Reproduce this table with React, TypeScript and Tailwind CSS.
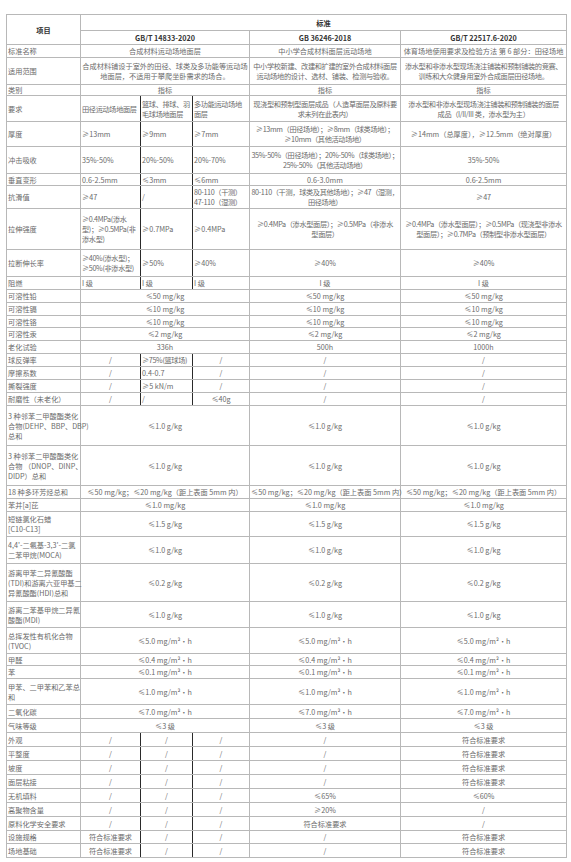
import React from "react";

type TdProps = {
  children?: React.ReactNode;
  cs?: number;
  rs?: number;
  left?: boolean;
  dark?: boolean;
  bold?: boolean;
  tight?: boolean;
};

// one table cell; "dark" draws the black divider between the GB/T 14833 sub columns
function Td({ children, cs, rs, left, dark, bold, tight }: TdProps) {
  return (
    <td
      colSpan={cs}
      rowSpan={rs}
      className={`border border-[#b8b8b8] px-[1px] py-0 whitespace-nowrap align-middle ${
        left ? "text-left" : "text-center"
      } ${dark ? "border-r-[#2a2a2a]" : ""} ${bold ? "font-bold text-[#333]" : ""} ${
        tight ? "tracking-[-0.35px]" : ""
      }`}
    >
      {children}
    </td>
  );
}

const Lbl = ({ children }: { children: React.ReactNode }) => <Td left>{children}</Td>;

// same value under each of the three standards
function Same3({ v }: { v: string }) {
  return (
    <>
      <Td cs={3}>{v}</Td>
      <Td>{v}</Td>
      <Td>{v}</Td>
    </>
  );
}

function Slash3({ a = "/", b = "/", c = "/" }: { a?: string; b?: string; c?: string }) {
  return (
    <>
      <Td dark>{a}</Td>
      <Td dark>{b}</Td>
      <Td>{c}</Td>
    </>
  );
}

export default function App() {
  return (
    <div className="min-h-[862px] w-[571px] bg-white pt-[14px] pl-[6px] font-['Noto_Sans_CJK_SC','Noto_Sans',sans-serif] text-[7.2px] leading-[10px] text-[#6a6a6a]">
      <table className="w-[560px] table-fixed border-collapse border border-[#a8a8a8]">
        <colgroup>
          <col className="w-[74px]" />
          <col className="w-[60px]" />
          <col className="w-[52px]" />
          <col className="w-[57px]" />
          <col className="w-[151px]" />
          <col className="w-[166px]" />
        </colgroup>
        <tbody>
          <tr className="h-[16px]">
            <Td rs={2} bold>项目</Td>
            <Td cs={5} bold>标准</Td>
          </tr>
          <tr className="h-[14px]">
            <Td cs={3} bold>GB/T 14833-2020</Td>
            <Td bold>GB 36246-2018</Td>
            <Td bold>GB/T 22517.6-2020</Td>
          </tr>
          <tr className="h-[13px]">
            <Lbl>标准名称</Lbl>
            <Td cs={3}>合成材料运动场地面层</Td>
            <Td>中小学合成材料面层运动场地</Td>
            <Td>体育场地使用要求及检验方法 第 6 部分：田径场地</Td>
          </tr>
          <tr className="h-[27px]">
            <Lbl>适用范围</Lbl>
            <Td cs={3}>
              合成材料铺设于室外的田径、球类及多功能等运动场
              <br />
              地面层，不适用于攀爬坐卧需求的场合。
            </Td>
            <Td tight>
              中小学校新建、改建和扩建的室外合成材料面层
              <br />
              运动场地的设计、选材、铺装、检测与验收。
            </Td>
            <Td tight>
              渗水型和非渗水型现场浇注铺装和预制铺装的竞赛、
              <br />
              训练和大众健身用室外合成面层田径场地。
            </Td>
          </tr>
          <tr className="h-[11px]">
            <Lbl>类别</Lbl>
            <Td cs={3}>指标</Td>
            <Td>指标</Td>
            <Td>指标</Td>
          </tr>
          <tr className="h-[26px]">
            <Lbl>要求</Lbl>
            <Td left dark tight>田径运动场地面层</Td>
            <Td left dark tight>
              篮球、排球、羽
              <br />
              毛球场地面层
            </Td>
            <Td left tight>
              多功能运动场地
              <br />
              面层
            </Td>
            <Td tight>
              现浇型和预制型面层成品（人造草面层及原料要
              <br />
              求未列在此表内）
            </Td>
            <Td tight>
              渗水型和非渗水型现场浇注铺装和预制铺装的面层
              <br />
              成品（I/II/III 类，渗水型为主）
            </Td>
          </tr>
          <tr className="h-[25px]">
            <Lbl>厚度</Lbl>
            <Td left dark>≥13mm</Td>
            <Td left dark>≥9mm</Td>
            <Td left>≥7mm</Td>
            <Td tight>
              ≥13mm（田径场地）；≥8mm（球类场地）；
              <br />
              ≥10mm（其他活动场地）
            </Td>
            <Td>≥14mm（总厚度），≥12.5mm（绝对厚度）</Td>
          </tr>
          <tr className="h-[27px]">
            <Lbl>冲击吸收</Lbl>
            <Td left dark>35%-50%</Td>
            <Td left dark>20%-50%</Td>
            <Td left>20%-70%</Td>
            <Td tight>
              35%-50%（田径场地）；20%-50%（球类场地）；
              <br />
              25%-50%（其他活动场地）
            </Td>
            <Td>35%-50%</Td>
          </tr>
          <tr className="h-[12px]">
            <Lbl>垂直变形</Lbl>
            <Td left dark>0.6-2.5mm</Td>
            <Td left dark>≤3mm</Td>
            <Td left>≤6mm</Td>
            <Td>0.6-3.0mm</Td>
            <Td>0.6-2.5mm</Td>
          </tr>
          <tr className="h-[23px]">
            <Lbl>抗滑值</Lbl>
            <Td left dark>≥47</Td>
            <Td left dark>/</Td>
            <Td left tight>
              80-110（干测）
              <br />
              47-110（湿测）
            </Td>
            <Td tight>
              80-110（干测，球类及其他场地）；≥47（湿测，
              <br />
              田径场地）
            </Td>
            <Td>≥47</Td>
          </tr>
          <tr className="h-[41px]">
            <Lbl>拉伸强度</Lbl>
            <Td left dark tight>
              ≥0.4MPa(渗水
              <br />
              型)；≥0.5MPa(非
              <br />
              渗水型)
            </Td>
            <Td left dark>≥0.7MPa</Td>
            <Td left>≥0.4MPa</Td>
            <Td tight>
              ≥0.4MPa（渗水型面层）；≥0.5MPa（非渗水
              <br />
              型面层）
            </Td>
            <Td tight>
              ≥0.4MPa（渗水型面层）；≥0.5MPa（现浇型非渗水
              <br />
              型面层）；≥0.7MPa（预制型非渗水型面层）
            </Td>
          </tr>
          <tr className="h-[27px]">
            <Lbl>拉断伸长率</Lbl>
            <Td left dark tight>
              ≥40%(渗水型)；
              <br />
              ≥50%(非渗水型)
            </Td>
            <Td left dark>≥50%</Td>
            <Td left>≥40%</Td>
            <Td>≥40%</Td>
            <Td>≥40%</Td>
          </tr>
          <tr className="h-[13px]">
            <Lbl>阻燃</Lbl>
            <Td left dark>I 级</Td>
            <Td left dark>I 级</Td>
            <Td left>I 级</Td>
            <Td>I 级</Td>
            <Td>I 级</Td>
          </tr>
          <tr className="h-[13px]">
            <Lbl>可溶性铅</Lbl>
            <Same3 v="≤50 mg/kg" />
          </tr>
          <tr className="h-[13px]">
            <Lbl>可溶性镉</Lbl>
            <Same3 v="≤10 mg/kg" />
          </tr>
          <tr className="h-[12px]">
            <Lbl>可溶性铬</Lbl>
            <Same3 v="≤10 mg/kg" />
          </tr>
          <tr className="h-[13px]">
            <Lbl>可溶性汞</Lbl>
            <Same3 v="≤2 mg/kg" />
          </tr>
          <tr className="h-[13px]">
            <Lbl>老化试验</Lbl>
            <Td cs={3}>336h</Td>
            <Td>500h</Td>
            <Td>1000h</Td>
          </tr>
          <tr className="h-[13px]">
            <Lbl>球反弹率</Lbl>
            <Td dark>/</Td>
            <Td left dark tight>≥75%(篮球场)</Td>
            <Td>/</Td>
            <Td>/</Td>
            <Td>/</Td>
          </tr>
          <tr className="h-[13px]">
            <Lbl>摩擦系数</Lbl>
            <Td dark>/</Td>
            <Td left dark>0.4-0.7</Td>
            <Td>/</Td>
            <Td>/</Td>
            <Td>/</Td>
          </tr>
          <tr className="h-[13px]">
            <Lbl>撕裂强度</Lbl>
            <Td dark>/</Td>
            <Td left dark>≥5 kN/m</Td>
            <Td>/</Td>
            <Td>/</Td>
            <Td>/</Td>
          </tr>
          <tr className="h-[13px]">
            <Lbl>耐磨性（未老化）</Lbl>
            <Td dark>/</Td>
            <Td left dark>/</Td>
            <Td>≤40g</Td>
            <Td>/</Td>
            <Td>/</Td>
          </tr>
          <tr className="h-[40px]">
            <Lbl>
              3 种邻苯二甲酸酯类化
              <br />
              合物(DEHP、BBP、DBP)
              <br />
              总和
            </Lbl>
            <Same3 v="≤1.0 g/kg" />
          </tr>
          <tr className="h-[40px]">
            <Lbl>
              3 种邻苯二甲酸酯类化
              <br />
              合物 （DNOP、DINP、
              <br />
              DIDP）总和
            </Lbl>
            <Same3 v="≤1.0 g/kg" />
          </tr>
          <tr className="h-[13px]">
            <Lbl>18 种多环芳烃总和</Lbl>
            <Same3 v="≤50 mg/kg；≤20 mg/kg（距上表面 5mm 内）" />
          </tr>
          <tr className="h-[13px]">
            <Lbl>苯并[a]芘</Lbl>
            <Same3 v="≤1.0 mg/kg" />
          </tr>
          <tr className="h-[25px]">
            <Lbl>
              短链氯化石蜡
              <br />
              [C10-C13]
            </Lbl>
            <Same3 v="≤1.5 g/kg" />
          </tr>
          <tr className="h-[27px]">
            <Lbl>
              4,4'-二氨基-3,3'-二氯
              <br />
              二苯甲烷(MOCA)
            </Lbl>
            <Same3 v="≤1.0 g/kg" />
          </tr>
          <tr className="h-[38px]">
            <Lbl>
              游离甲苯二异氰酸酯
              <br />
              (TDI)和游离六亚甲基二
              <br />
              异氰酸酯(HDI)总和
            </Lbl>
            <Same3 v="≤0.2 g/kg" />
          </tr>
          <tr className="h-[26px]">
            <Lbl>
              游离二苯基甲烷二异氰
              <br />
              酸酯(MDI)
            </Lbl>
            <Same3 v="≤1.0 g/kg" />
          </tr>
          <tr className="h-[26px]">
            <Lbl>
              总挥发性有机化合物
              <br />
              (TVOC)
            </Lbl>
            <Same3 v="≤5.0 mg/m²·h" />
          </tr>
          <tr className="h-[12px]">
            <Lbl>甲醛</Lbl>
            <Same3 v="≤0.4 mg/m²·h" />
          </tr>
          <tr className="h-[13px]">
            <Lbl>苯</Lbl>
            <Same3 v="≤0.1 mg/m²·h" />
          </tr>
          <tr className="h-[26px]">
            <Lbl>
              甲苯、二甲苯和乙苯总
              <br />
              和
            </Lbl>
            <Same3 v="≤1.0 mg/m²·h" />
          </tr>
          <tr className="h-[14px]">
            <Lbl>二氧化碳</Lbl>
            <Same3 v="≤7.0 mg/m²·h" />
          </tr>
          <tr className="h-[14px]">
            <Lbl>气味等级</Lbl>
            <Same3 v="≤3 级" />
          </tr>
          {["外观", "平整度", "坡度", "面层粘接"].map((k) => (
            <tr key={k} className="h-[14px]">
              <Lbl>{k}</Lbl>
              <Slash3 />
              <Td>/</Td>
              <Td>符合标准要求</Td>
            </tr>
          ))}
          <tr className="h-[14px]">
            <Lbl>无机填料</Lbl>
            <Slash3 />
            <Td>≤65%</Td>
            <Td>≤60%</Td>
          </tr>
          <tr className="h-[14px]">
            <Lbl>高聚物含量</Lbl>
            <Slash3 />
            <Td>≥20%</Td>
            <Td>/</Td>
          </tr>
          <tr className="h-[14px]">
            <Lbl>原料化学安全要求</Lbl>
            <Slash3 />
            <Td>符合标准要求</Td>
            <Td>/</Td>
          </tr>
          <tr className="h-[13px]">
            <Lbl>设施规格</Lbl>
            <Slash3 a="符合标准要求" />
            <Td>/</Td>
            <Td>符合标准要求</Td>
          </tr>
          <tr className="h-[14px]">
            <Lbl>场地基础</Lbl>
            <Slash3 a="符合标准要求" />
            <Td>/</Td>
            <Td>符合标准要求</Td>
          </tr>
        </tbody>
      </table>
    </div>
  );
}
